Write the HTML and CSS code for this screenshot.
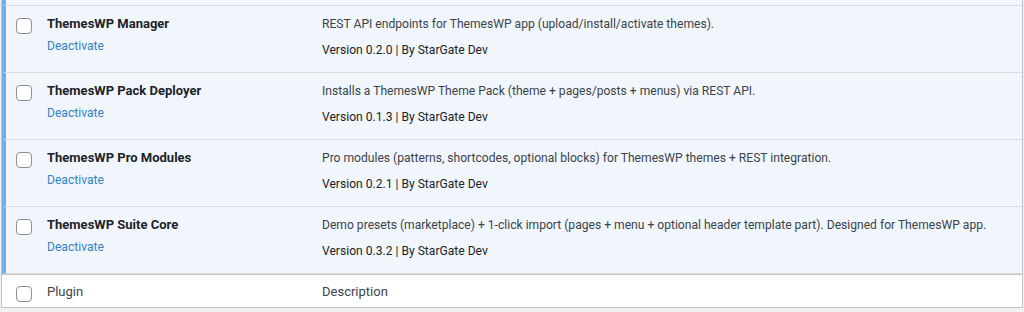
FILE: index.html
```html
<!DOCTYPE html>
<html lang="en">
<head>
    <meta charset="UTF-8">
    <meta name="viewport" content="width=device-width, initial-scale=1.0">
    <title>Plugins</title>
    <link rel="stylesheet" href="styles.css">
</head>
<body>
<main class="plugins">
    <div class="row active stub"></div>

    <div class="row active">
        <div class="check"><span class="box"></span></div>
        <div class="title">
            <strong>ThemesWP Manager</strong>
            <a class="action" href="#">Deactivate</a>
        </div>
        <div class="desc">
            <p>REST API endpoints for ThemesWP app (upload/install/activate themes).</p>
            <p class="meta">Version 0.2.0 | By StarGate Dev</p>
        </div>
    </div>

    <div class="row active">
        <div class="check"><span class="box"></span></div>
        <div class="title">
            <strong>ThemesWP Pack Deployer</strong>
            <a class="action" href="#">Deactivate</a>
        </div>
        <div class="desc">
            <p>Installs a ThemesWP Theme Pack (theme + pages/posts + menus) via REST API.</p>
            <p class="meta">Version 0.1.3 | By StarGate Dev</p>
        </div>
    </div>

    <div class="row active">
        <div class="check"><span class="box"></span></div>
        <div class="title">
            <strong>ThemesWP Pro Modules</strong>
            <a class="action" href="#">Deactivate</a>
        </div>
        <div class="desc">
            <p>Pro modules (patterns, shortcodes, optional blocks) for ThemesWP themes + REST integration.</p>
            <p class="meta">Version 0.2.1 | By StarGate Dev</p>
        </div>
    </div>

    <div class="row active">
        <div class="check"><span class="box"></span></div>
        <div class="title">
            <strong>ThemesWP Suite Core</strong>
            <a class="action" href="#">Deactivate</a>
        </div>
        <div class="desc">
            <p>Demo presets (marketplace) + 1-click import (pages + menu + optional header template part). Designed for ThemesWP app.</p>
            <p class="meta">Version 0.3.2 | By StarGate Dev</p>
        </div>
    </div>

    <div class="row foot">
        <div class="check"><span class="box"></span></div>
        <div class="title">Plugin</div>
        <div class="desc">Description</div>
    </div>
</main>
</body>
</html>
```

FILE: styles.css
```css
*{
    box-sizing: border-box;
}
body{
    margin: 0;
    background-color: #f0f0f1;
    font-family: Roboto, "Liberation Sans", sans-serif;
    font-size: 12.1px;
    line-height: 18px;
    color: #3c434a;
}
.plugins{
    margin: 0 1px 0 1px;
    border-left: 1px solid #c3c4c7;
    border-right: 1px solid #c3c4c7;
    border-bottom: 1px solid #c3c4c7;
    background-color: #fff;
}
.row{
    display: grid;
    grid-template-columns: 35px 275px 1fr;
}
.row.active{
    background-color: #f0f6fc;
    border-left: 4px solid #72aee6;
    border-bottom: 1px solid #dcdcde;
    height: 67px;
}
.row.stub{
    height: 6px;
}
.check{
    padding: 12px 0 0 10px;
}
.box{
    display: block;
    width: 16px;
    height: 16px;
    border: 1px solid #8c8f94;
    border-radius: 4px;
    background-color: #fff;
}
.title{
    padding: 8px 10px 0 6px;
}
.title strong{
    display: block;
    font-size: 13px;
    line-height: 20px;
    font-weight: 700;
    color: #1d2327;
}
.action{
    display: block;
    padding-top: 3px;
    color: #3582c4;
    text-decoration: none;
}
.desc{
    padding: 9px 10px 0 6px;
}
.desc p{
    margin: 0;
}
.desc .meta{
    margin-top: 8px;
    color: #1d2327;
}
.row.foot{
    border-top: 1px solid #c3c4c7;
    height: 33px;
    font-size: 13px;
    grid-template-columns: 39px 275px 1fr;
}
.foot .check{
    padding: 11px 0 0 14px;
}
.foot .title{
    padding: 7px 10px 0 6px;
    line-height: 20px;
}
.foot .desc{
    padding: 7px 10px 0 6px;
    line-height: 20px;
}
```
